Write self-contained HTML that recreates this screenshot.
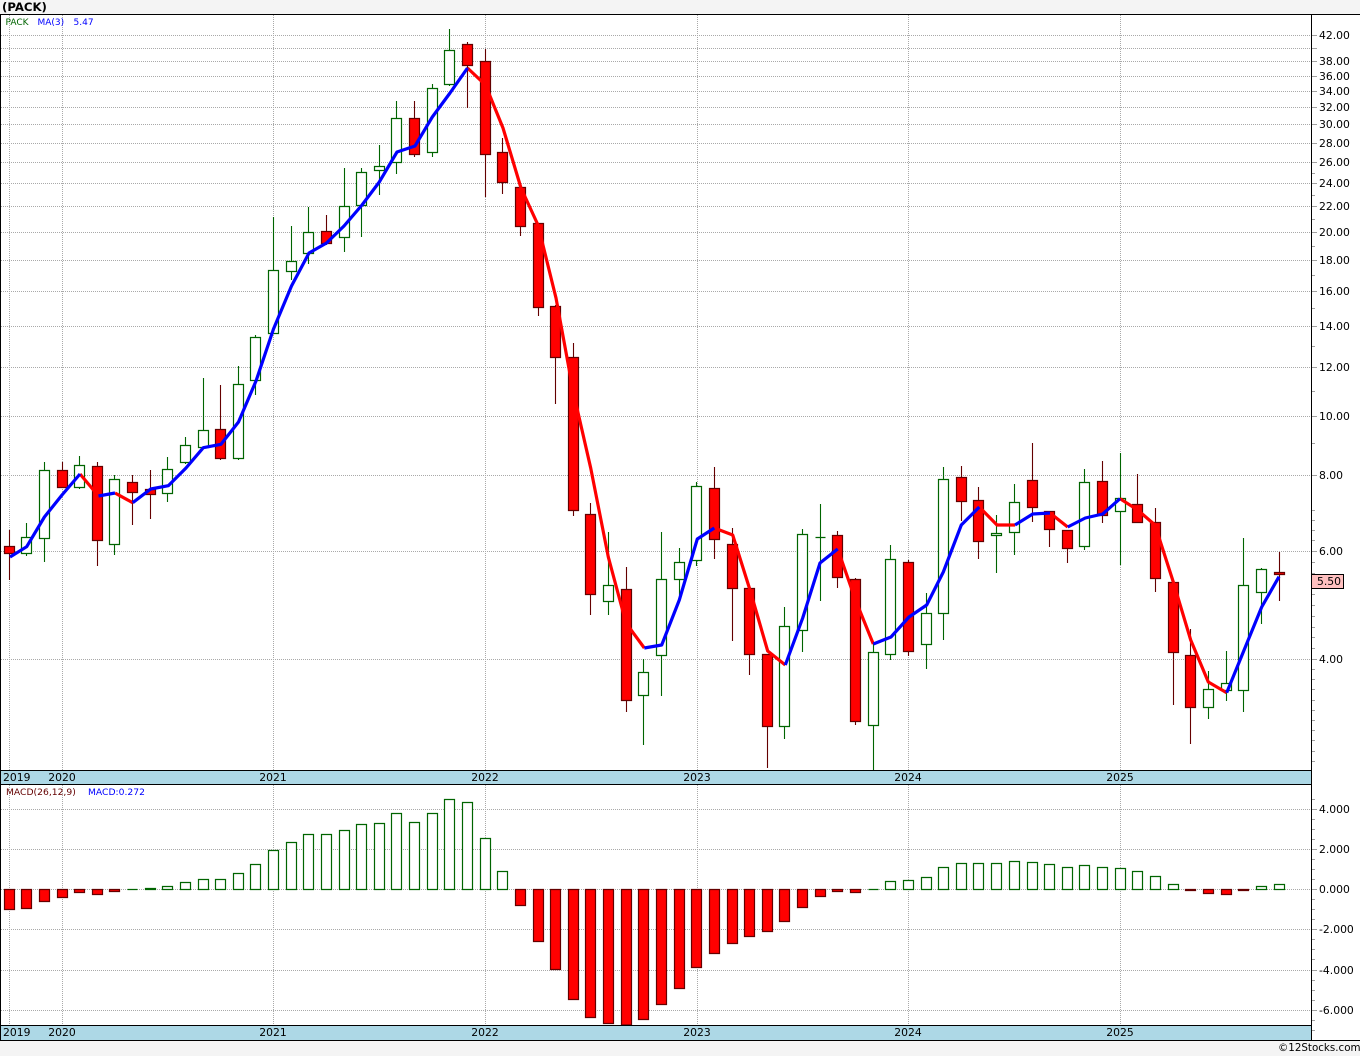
<!DOCTYPE html>
<html lang="en">
<head>
<meta charset="utf-8">
<title>(PACK)</title>
<style>
html,body{margin:0;padding:0;background:#f4f4f4;width:1360px;height:1056px;overflow:hidden}
svg{display:block}
text{font-family:"DejaVu Sans","Liberation Sans",sans-serif}
.g{stroke:#a9a9a9;stroke-width:1;stroke-dasharray:1 1;fill:none;shape-rendering:crispEdges}
.t{stroke:#a0a0a0;stroke-width:1;fill:none;shape-rendering:crispEdges}
.k{stroke:#000;stroke-width:1;fill:none;shape-rendering:crispEdges}
.l{font-size:10.8px;fill:#000}
.y{font-size:10.8px;fill:#000;text-anchor:middle}
.ma{fill:none;stroke-width:3.2;stroke-linejoin:round;stroke-linecap:butt}
</style>
</head>
<body>
<svg xmlns="http://www.w3.org/2000/svg" width="1360" height="1056" viewBox="0 0 1360 1056">
<rect x="0" y="0" width="1360" height="1056" fill="#f4f4f4"/>
<rect x="0" y="14" width="1360" height="1027" fill="#fff"/>
<text x="2" y="11" font-size="11.7" font-weight="bold" fill="#000">(PACK)</text>

<!-- blue date bars -->
<rect x="1" y="771" width="1310" height="13" fill="#add8e6"/>
<rect x="1" y="1026" width="1310" height="14" fill="#add8e6"/>

<!-- grid price panel -->
<path class="g" d="M1 35.5H1311M1 48.5H1311M1 61.5H1311M1 76.5H1311M1 91.5H1311M1 107.5H1311M1 124.5H1311M1 143.5H1311M1 162.5H1311M1 183.5H1311M1 206.5H1311M1 232.5H1311M1 260.5H1311M1 291.5H1311M1 326.5H1311M1 367.5H1311M1 416.5H1311M1 475.5H1311M1 551.5H1311M1 659.5H1311"/>
<path class="g" d="M9.5 15V770M62.5 15V770M273.5 15V770M485.5 15V770M697.5 15V770M908.5 15V770M1120.5 15V770"/>
<!-- grid macd panel -->
<path class="g" d="M1 809.5H1311M1 849.5H1311M1 889.5H1311M1 929.5H1311M1 970.5H1311M1 1010.5H1311"/>
<path class="g" d="M9.5 785V1025M62.5 785V1025M273.5 785V1025M485.5 785V1025M697.5 785V1025M908.5 785V1025M1120.5 785V1025"/>

<!-- axis ticks -->
<path class="t" d="M1312 35.5H1317M1312 48.5H1317M1312 61.5H1317M1312 76.5H1317M1312 91.5H1317M1312 107.5H1317M1312 124.5H1317M1312 143.5H1317M1312 162.5H1317M1312 183.5H1317M1312 206.5H1317M1312 232.5H1317M1312 260.5H1317M1312 291.5H1317M1312 326.5H1317M1312 367.5H1317M1312 416.5H1317M1312 475.5H1317M1312 551.5H1317M1312 659.5H1317"/>
<path class="t" d="M1312 173.5H1315M1312 195.5H1315M1312 219.5H1315M1312 246.5H1315M1312 275.5H1315M1312 308.5H1315M1312 346.5H1315M1312 391.5H1315M1312 443.5H1315M1312 510.5H1315M1312 520.5H1315M1312 530.5H1315M1312 540.5H1315M1312 562.5H1315M1312 573.5H1315M1312 583.5H1315M1312 594.5H1315M1312 605.5H1315M1312 616.5H1315M1312 627.5H1315M1312 637.5H1315M1312 648.5H1315M1312 669.5H1315M1312 679.5H1315M1312 689.5H1315M1312 700.5H1315M1312 710.5H1315M1312 720.5H1315M1312 730.5H1315M1312 740.5H1315M1312 751.5H1315M1312 761.5H1315"/>
<path class="t" d="M1312 809.5H1317M1312 849.5H1317M1312 889.5H1317M1312 929.5H1317M1312 970.5H1317M1312 1010.5H1317"/>
<path class="t" d="M1312 799.5H1315M1312 819.5H1315M1312 829.5H1315M1312 839.5H1315M1312 859.5H1315M1312 869.5H1315M1312 879.5H1315M1312 899.5H1315M1312 909.5H1315M1312 919.5H1315M1312 939.5H1315M1312 949.5H1315M1312 959.5H1315M1312 980.5H1315M1312 990.5H1315M1312 1000.5H1315M1312 1020.5H1315M1312 1030.5H1315"/>

<!-- wicks -->
<path fill="none" stroke="#640000" stroke-width="1.1" d="M9.5 530V580M62.5 462V487M97.5 462V566M132.5 475V525M150.5 470V519M220.5 385V460M326.5 215V245M414.5 101V157M467.5 42V108M485.5 49V197M502.5 138V194M520.5 187V236M538.5 223V316M555.5 305V404M573.5 343V516M590.5 503V615M626.5 567V712M714.5 467V559M732.5 528V641M749.5 588V675M767.5 654V768M837.5 531V588M855.5 578V725M908.5 560V656M961.5 466V521M978.5 487V559M1032.5 443V522M1049.5 511V547M1067.5 530V563M1102.5 461V523M1137.5 474V523M1155.5 508V592M1173.5 582V705M1190.5 629V744M1279.5 552V601"/>
<path fill="none" stroke="#006400" stroke-width="1.1" d="M26.5 523V556M44.5 462V562M79.5 456V489M114.5 475V555M167.5 457V502M185.5 437V464M203.5 378V448M238.5 366V460M255.5 335V395M273.5 217V334M291.5 226V280M308.5 207V264M344.5 168V252M361.5 168V237M379.5 145V195M396.5 101V174M432.5 84V157M449.5 29V86M608.5 532V615M643.5 659V745M661.5 532V696M679.5 548V597M696.5 482V566M784.5 607V739M802.5 529V652M820.5 504V601M873.5 643V770M890.5 545V660M926.5 593V669M943.5 467V640M996.5 515V573M1014.5 484V555M1084.5 469V550M1120.5 453V565M1208.5 671V719M1226.5 651V701M1243.5 538V712M1261.5 568V624"/>

<!-- bodies -->
<path fill="#fff" stroke="#006400" stroke-width="1.2" d="M21.5 537.5h10V553.5h-10zM39.5 470.5h10V538.5h-10zM74.5 465.5h10V487.5h-10zM109.5 479.5h10V544.5h-10zM162.5 469.5h10V493.5h-10zM180.5 445.5h10V462.5h-10zM198.5 430.5h10V447.5h-10zM233.5 384.5h10V458.5h-10zM250.5 337.5h10V380.5h-10zM268.5 270.5h10V333.5h-10zM286.5 261.5h10V271.5h-10zM303.5 232.5h10V253.5h-10zM339.5 206.5h10V237.5h-10zM356.5 172.5h10V205.5h-10zM374.5 166.5h10V170.5h-10zM391.5 118.5h10V162.5h-10zM427.5 88.5h10V152.5h-10zM444.5 50.5h10V84.5h-10zM603.5 585.5h10V601.5h-10zM638.5 672.5h10V695.5h-10zM656.5 579.5h10V655.5h-10zM674.5 562.5h10V579.5h-10zM691.5 486.5h10V560.5h-10zM779.5 626.5h10V726.5h-10zM797.5 534.5h10V630.5h-10zM815.5 537.5h10M868.5 652.5h10V725.5h-10zM885.5 559.5h10V654.5h-10zM921.5 613.5h10V644.5h-10zM938.5 479.5h10V613.5h-10zM991.5 533.5h10V535.5h-10zM1009.5 502.5h10V532.5h-10zM1079.5 482.5h10V546.5h-10zM1115.5 498.5h10V511.5h-10zM1203.5 689.5h10V707.5h-10zM1221.5 683.5h10V690.5h-10zM1238.5 585.5h10V690.5h-10zM1256.5 569.5h10V592.5h-10z"/>
<path fill="#f00" stroke="#640000" stroke-width="1.2" d="M4.5 546.5h10V553.5h-10zM57.5 470.5h10V487.5h-10zM92.5 466.5h10V540.5h-10zM127.5 482.5h10V492.5h-10zM145.5 489.5h10V494.5h-10zM215.5 429.5h10V458.5h-10zM321.5 231.5h10V243.5h-10zM409.5 118.5h10V154.5h-10zM462.5 44.5h10V65.5h-10zM480.5 61.5h10V154.5h-10zM497.5 152.5h10V182.5h-10zM515.5 187.5h10V226.5h-10zM533.5 223.5h10V307.5h-10zM550.5 306.5h10V357.5h-10zM568.5 357.5h10V510.5h-10zM585.5 514.5h10V594.5h-10zM621.5 589.5h10V700.5h-10zM709.5 488.5h10V539.5h-10zM727.5 544.5h10V588.5h-10zM744.5 588.5h10V654.5h-10zM762.5 654.5h10V726.5h-10zM832.5 535.5h10V577.5h-10zM850.5 579.5h10V721.5h-10zM903.5 562.5h10V651.5h-10zM956.5 477.5h10V501.5h-10zM973.5 500.5h10V541.5h-10zM1027.5 480.5h10V507.5h-10zM1044.5 511.5h10V529.5h-10zM1062.5 530.5h10V548.5h-10zM1097.5 481.5h10V515.5h-10zM1132.5 504.5h10V522.5h-10zM1150.5 522.5h10V578.5h-10zM1168.5 582.5h10V652.5h-10zM1185.5 655.5h10V707.5h-10zM1274.5 572.5h10V574.5h-10z"/>

<!-- moving average -->
<g class="ma" stroke="#f00">
<polyline class="ma" points="80,474 98.5,496"/>
<polyline class="ma" points="115,493 132.7,502.7"/>
<polyline class="ma" points="467.5,68 485.5,85 503,128 521,188 538,225 556,298 573.5,393 590.7,468 608.3,557 626,623 644.3,648"/>
<polyline class="ma" points="714.3,528 732.7,535 750,590 767.7,651 785.3,665"/>
<polyline class="ma" points="837.7,549 855.5,600 873.3,644"/>
<polyline class="ma" points="979.3,507 997,525 1015,525"/>
<polyline class="ma" points="1050,513 1067.7,527"/>
<polyline class="ma" points="1120,498.7 1137.7,510 1155,525 1173.3,582 1190.7,640 1208.3,682 1226.7,692.7"/>
</g>
<g class="ma" stroke="#00f">
<polyline class="ma" points="10,557 26.7,546.7 44.4,517 62,495 80,474"/>
<polyline class="ma" points="98.5,496 115,493"/>
<polyline class="ma" points="132.7,502.7 150.7,489 168.3,485.7 186,468 203.3,447.7 221,444.3 238.5,422 256,381 273.5,329 291.5,286 309,253 326.5,243 344,226 362,205 379.3,182 397,152 415,146 432.3,117 450,93 467.5,68"/>
<polyline class="ma" points="644.3,648 661.7,645 679.3,600 697.3,539 714.3,528"/>
<polyline class="ma" points="785.3,665 802.7,618 820,563 837.7,549"/>
<polyline class="ma" points="873.3,644 891,637 909,617 926.7,605 943.3,572 961.3,525 979.3,507"/>
<polyline class="ma" points="1015,525 1032.7,514 1050,513"/>
<polyline class="ma" points="1067.7,527 1085.3,518 1102.7,514 1120,498.7"/>
<polyline class="ma" points="1226.7,692.7 1243.7,651 1261.7,607 1279,576.7"/>
</g>

<!-- macd bars -->
<path fill="#fff" stroke="#006400" stroke-width="1.2" d="M127.5 889.5h10M145.5 888.5h10V889.5h-10zM162.5 886.5h10V889.5h-10zM180.5 882.5h10V889.5h-10zM198.5 879.5h10V889.5h-10zM215.5 879.5h10V889.5h-10zM233.5 873.5h10V889.5h-10zM250.5 864.5h10V889.5h-10zM268.5 850.5h10V889.5h-10zM286.5 842.5h10V889.5h-10zM303.5 834.5h10V889.5h-10zM321.5 834.5h10V889.5h-10zM339.5 830.5h10V889.5h-10zM356.5 824.5h10V889.5h-10zM374.5 823.5h10V889.5h-10zM391.5 813.5h10V889.5h-10zM409.5 822.5h10V889.5h-10zM427.5 813.5h10V889.5h-10zM444.5 799.5h10V889.5h-10zM462.5 802.5h10V889.5h-10zM480.5 838.5h10V889.5h-10zM497.5 871.5h10V889.5h-10zM868.5 889.5h10M885.5 881.5h10V889.5h-10zM903.5 880.5h10V889.5h-10zM921.5 877.5h10V889.5h-10zM938.5 867.5h10V889.5h-10zM956.5 863.5h10V889.5h-10zM973.5 863.5h10V889.5h-10zM991.5 863.5h10V889.5h-10zM1009.5 861.5h10V889.5h-10zM1027.5 862.5h10V889.5h-10zM1044.5 864.5h10V889.5h-10zM1062.5 867.5h10V889.5h-10zM1079.5 865.5h10V889.5h-10zM1097.5 867.5h10V889.5h-10zM1115.5 868.5h10V889.5h-10zM1132.5 871.5h10V889.5h-10zM1150.5 876.5h10V889.5h-10zM1168.5 884.5h10V889.5h-10zM1256.5 886.5h10V889.5h-10zM1274.5 884.5h10V889.5h-10z"/>
<path fill="#f00" stroke="#640000" stroke-width="1.2" d="M4.5 889.5h10V909.5h-10zM21.5 889.5h10V908.5h-10zM39.5 889.5h10V901.5h-10zM57.5 889.5h10V897.5h-10zM74.5 889.5h10V892.5h-10zM92.5 889.5h10V894.5h-10zM109.5 889.5h10V891.5h-10zM515.5 889.5h10V905.5h-10zM533.5 889.5h10V941.5h-10zM550.5 889.5h10V969.5h-10zM568.5 889.5h10V999.5h-10zM585.5 889.5h10V1017.5h-10zM603.5 889.5h10V1023.5h-10zM621.5 889.5h10V1025h-10zM638.5 889.5h10V1019.5h-10zM656.5 889.5h10V1004.5h-10zM674.5 889.5h10V988.5h-10zM691.5 889.5h10V967.5h-10zM709.5 889.5h10V953.5h-10zM727.5 889.5h10V943.5h-10zM744.5 889.5h10V936.5h-10zM762.5 889.5h10V931.5h-10zM779.5 889.5h10V921.5h-10zM797.5 889.5h10V907.5h-10zM815.5 889.5h10V896.5h-10zM832.5 889.5h10V891.5h-10zM850.5 889.5h10V892.5h-10zM1185.5 889.5h10V890.5h-10zM1203.5 889.5h10V893.5h-10zM1221.5 889.5h10V894.5h-10zM1238.5 889.5h10V890.5h-10z"/>

<!-- frame -->
<path class="k" d="M0 14.5H1360M0.5 14V1041M1311.5 14V1041M0 770.5H1312M0 784.5H1312M0 1025.5H1312M0 1040.5H1360"/>

<!-- legend -->
<text x="5.5" y="25" font-size="9" fill="#006400">PACK</text>
<text x="37.5" y="25" font-size="9" fill="#00f">MA(3)</text>
<text x="73.5" y="25" font-size="9" fill="#00f">5.47</text>
<text x="6" y="795" font-size="9.2" fill="#640000">MACD(26,12,9)</text>
<text x="88" y="795" font-size="9.2" fill="#00f">MACD:0.272</text>

<!-- year labels -->
<text x="3" y="781" font-size="10.8" fill="#000">2019</text>
<text class="y" x="62" y="781">2020</text>
<text class="y" x="273" y="781">2021</text>
<text class="y" x="485" y="781">2022</text>
<text class="y" x="697" y="781">2023</text>
<text class="y" x="908" y="781">2024</text>
<text class="y" x="1120" y="781">2025</text>
<text x="3" y="1036" font-size="10.8" fill="#000">2019</text>
<text class="y" x="62" y="1036">2020</text>
<text class="y" x="273" y="1036">2021</text>
<text class="y" x="485" y="1036">2022</text>
<text class="y" x="697" y="1036">2023</text>
<text class="y" x="908" y="1036">2024</text>
<text class="y" x="1120" y="1036">2025</text>

<!-- price labels -->
<text class="l" x="1319" y="39">42.00</text>
<text class="l" x="1319" y="65">38.00</text>
<text class="l" x="1319" y="80">36.00</text>
<text class="l" x="1319" y="95">34.00</text>
<text class="l" x="1319" y="111">32.00</text>
<text class="l" x="1319" y="128">30.00</text>
<text class="l" x="1319" y="147">28.00</text>
<text class="l" x="1319" y="166">26.00</text>
<text class="l" x="1319" y="187">24.00</text>
<text class="l" x="1319" y="210">22.00</text>
<text class="l" x="1319" y="236">20.00</text>
<text class="l" x="1319" y="264">18.00</text>
<text class="l" x="1319" y="295">16.00</text>
<text class="l" x="1319" y="330">14.00</text>
<text class="l" x="1319" y="371">12.00</text>
<text class="l" x="1319" y="420">10.00</text>
<text class="l" x="1319" y="479">8.00</text>
<text class="l" x="1319" y="555">6.00</text>
<text class="l" x="1319" y="663">4.00</text>
<rect x="1311.5" y="574.5" width="32" height="14" fill="#ffc0c0" stroke="#000" stroke-width="1"/>
<text class="l" x="1317" y="585">5.50</text>

<!-- macd labels -->
<text class="l" x="1319" y="813">4.000</text>
<text class="l" x="1319" y="853">2.000</text>
<text class="l" x="1319" y="893">0.000</text>
<text class="l" x="1319" y="933">-2.000</text>
<text class="l" x="1319" y="974">-4.000</text>
<text class="l" x="1319" y="1014">-6.000</text>

<text x="1278" y="1051" font-size="10.3" fill="#000">©12Stocks.com</text>
</svg>
</body>
</html>
